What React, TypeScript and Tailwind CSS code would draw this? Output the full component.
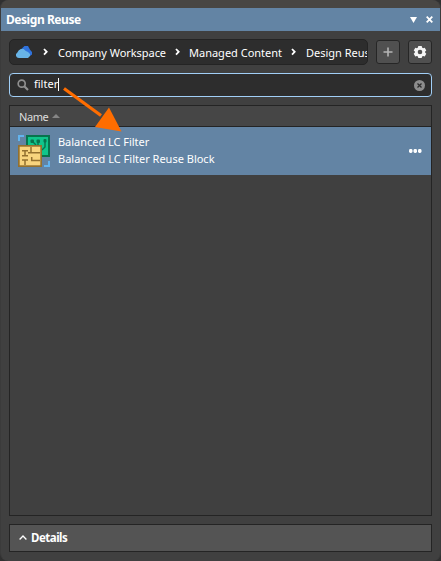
import React from "react";

function Cloud() {
  return (
    <svg width="16" height="12" viewBox="0 0 16 12" className="shrink-0">
      <path d="M5 3.2 8.5.1H12L14.2 4 16 6v2.6L14 10H8Z" fill="#2f72dc" />
      <path d="M2.8 12A2.9 2.9 0 0 1 1.2 6.7L2.6 4.5 4.8 3h2.8l2.2 2.1 2.2 1 2 2V10l-2 2Z" fill="#68b4e7" />
    </svg>
  );
}

function Chevron() {
  return (
    <svg width="5" height="8" viewBox="0 0 5 8" className="shrink-0">
      <path d="m1 1 2.7 2.8L1 6.6" fill="none" stroke="#fff" strokeWidth="1.8" />
    </svg>
  );
}

function Gear() {
  return (
    <svg width="14" height="14" viewBox="0 0 14 14">
      <path
        fillRule="evenodd"
        fill="#f5f5f5"
        d="M5.3 1h3.4l.4 1.6 1 .6 1.6-.5 1.6 2.8L12.1 6.6v1l1.2 1.1-1.6 2.8-1.6-.5-1 .6L8.7 13H5.3l-.4-1.4-1-.6-1.6.5L.7 8.7l1.2-1.1v-1L.7 5.5l1.6-2.8 1.6.5 1-.6ZM7 4.7a2.3 2.3 0 1 0 0 4.6 2.3 2.3 0 0 0 0-4.6Z"
      />
    </svg>
  );
}

function BlockIcon() {
  return (
    <svg width="32" height="32" viewBox="0 0 32 32" className="shrink-0">
      <path d="M0 0h6v2H2v4H0ZM30 26h2v6h-6v-2h4Z" fill="#62b4ee" />
      <rect x="8" y="0" width="24" height="22" fill="#08734d" />
      <rect x="10" y="2" width="20" height="18" fill="#10c58b" />
      <path d="m14 6 4 4M20 6v6M27 5v7l-3 3" fill="none" stroke="#08734d" strokeWidth="1.4" />
      <g fill="#08734d">
        <rect x="12.500" y="4.500" width="3.500" height="3.500" rx="1" />
        <rect x="18.500" y="4.500" width="3.500" height="3.500" rx="1" />
        <rect x="25.500" y="4" width="3" height="3.500" rx="1" />
      </g>
      <rect x="0" y="10" width="24" height="22" fill="#93702f" />
      <rect x="1.700" y="11.700" width="20.600" height="18.600" fill="#f8d47e" />
      <path
        d="M4 15.700h6M7 15.700v5M4 20.700h6M13 12v5.700h9M10 17.700h3M4 25h6M7 25v5M13.700 22v3.500h8.300"
        fill="none"
        stroke="#93702f"
        strokeWidth="1.5"
      />
    </svg>
  );
}

export default function App() {
  return (
    <div className="relative h-[561px] w-[441px] overflow-hidden bg-[#303030] font-['Noto_Sans','Open_Sans',sans-serif] text-[11px] text-white">
      <div className="flex h-full flex-col rounded-[8px] border-x border-[#3b3b3b] bg-[#404040]">
        <div className="h-2 shrink-0 rounded-t-[8px] bg-[#484643]" />
        <header className="flex h-[23px] shrink-0 items-center bg-[#6384a4] pr-[7px] pl-[5px]">
          <h1 className="flex-1 text-[12px] leading-[22px] font-bold tracking-[-0.45px]">Design Reuse</h1>
          <svg width="7" height="6" viewBox="0 0 7 6" className="mr-[9px]"><path d="M0 0h7L3.5 6Z" fill="#fff" /></svg>
          <svg width="7" height="7" viewBox="0 0 7 7"><path d="m.7.7 5.6 5.6m0-5.6L.7 6.3" stroke="#fff" strokeWidth="1.8" /></svg>
        </header>

        <main className="flex flex-1 flex-col px-2 pt-2 pb-[8px]">
          <div className="flex h-[26px] shrink-0 items-center">
            <nav className="flex h-[26px] w-[359px] items-center overflow-hidden rounded-[5px] border border-[#242424] bg-[#2d2d2d] pl-[6px] whitespace-nowrap">
              <Cloud />
              <span className="ml-[11px] flex"><Chevron /></span>
              <span className="ml-[10px] w-[109px] shrink-0 pt-[2px] tracking-[-0.05px]">Company Workspace</span>
              <span className="ml-[8px] flex"><Chevron /></span>
              <span className="ml-[9px] w-[94px] shrink-0 pt-[2px]">Managed Content</span>
              <span className="ml-[8px] flex"><Chevron /></span>
              <span className="ml-[10px] w-[61px] shrink-0 overflow-hidden pt-[2px]">Design Reuse</span>
            </nav>
            <button className="ml-2 flex h-6 w-6 items-center justify-center rounded-[3px] border border-[#262626] bg-[#505050]">
              <svg width="10" height="10" viewBox="0 0 10 10"><path d="M5 .5v9M.5 5h9" stroke="#b4b4b4" strokeWidth="1.6" /></svg>
            </button>
            <button className="ml-2 flex h-6 w-6 items-center justify-center rounded-[3px] border border-[#262626] bg-[#505050]"><Gear /></button>
          </div>

          <div className="mt-2 flex h-6 shrink-0 items-center rounded-[4px] border border-[#a1cff7] bg-[#2d2d2d] pr-[6px] pl-[7px]">
            <svg width="12" height="12" viewBox="0 0 12 12"><circle cx="4.7" cy="4.7" r="3.5" fill="none" stroke="#8f8f8f" strokeWidth="1.7" /><path d="m7.3 7.3 3.7 3.7" stroke="#8f8f8f" strokeWidth="2.2" /></svg>
            <span className="ml-[5px] pb-[2px] leading-4">filter</span>
            <span className="mb-px h-[13px] w-px bg-white" />
            <svg className="ml-auto" width="11" height="11" viewBox="0 0 11 11"><circle cx="5.5" cy="5.5" r="5.5" fill="#8d8d8d" /><path d="m3.5 3.5 4 4m0-4-4 4" stroke="#2d2d2d" strokeWidth="1.3" /></svg>
          </div>

          <section className="mt-2 flex h-[411px] shrink-0 flex-col border border-[#242424]">
            <div className="flex h-[21px] shrink-0 items-center border-b border-[#242424] bg-[#464646] pl-[9px] text-[#dedede]">
              <span className="pt-[2px] tracking-[-0.4px]">Name</span>
              <svg className="ml-[4px]" width="8" height="4" viewBox="0 0 8 4"><path d="m4 0 4 4H0Z" fill="#858585" /></svg>
            </div>
            <div className="flex h-12 shrink-0 items-center bg-[#6384a4] pr-[9px] pl-2">
              <BlockIcon />
              <div className="ml-2 pb-[2px] leading-[17px]">
                <p className="tracking-[-0.03px]">Balanced LC Filter</p>
                <p>Balanced LC Filter Reuse Block</p>
              </div>
              <svg className="ml-auto" width="13" height="4" viewBox="0 0 13 4" fill="#fff"><rect width="3.5" height="4" rx="1.4" /><rect x="4.5" width="3.5" height="4" rx="1.4" /><rect x="9" width="3.5" height="4" rx="1.4" /></svg>
            </div>
          </section>

          <footer className="mt-2 flex h-7 shrink-0 items-center border border-[#242424] bg-[#545454] pl-[9px]">
            <svg width="8" height="5" viewBox="0 0 8 5" className="mb-[2px]"><path d="m.6 4.5 3.4-3.5 3.4 3.5" fill="none" stroke="#fff" strokeWidth="1.3" /></svg>
            <span className="ml-[4px] pb-px text-[11.5px] font-bold tracking-[-0.5px]">Details</span>
          </footer>
        </main>
      </div>
      <svg className="pointer-events-none absolute top-[86px] left-[62px]" width="62" height="48" viewBox="0 0 62 48">
        <path d="m2 2.500 37 27" stroke="#ff6d00" strokeWidth="3.2" />
        <path d="M47 21.500 59.500 45.500 33 41Z" fill="#ff6d00" />
      </svg>
    </div>
  );
}
